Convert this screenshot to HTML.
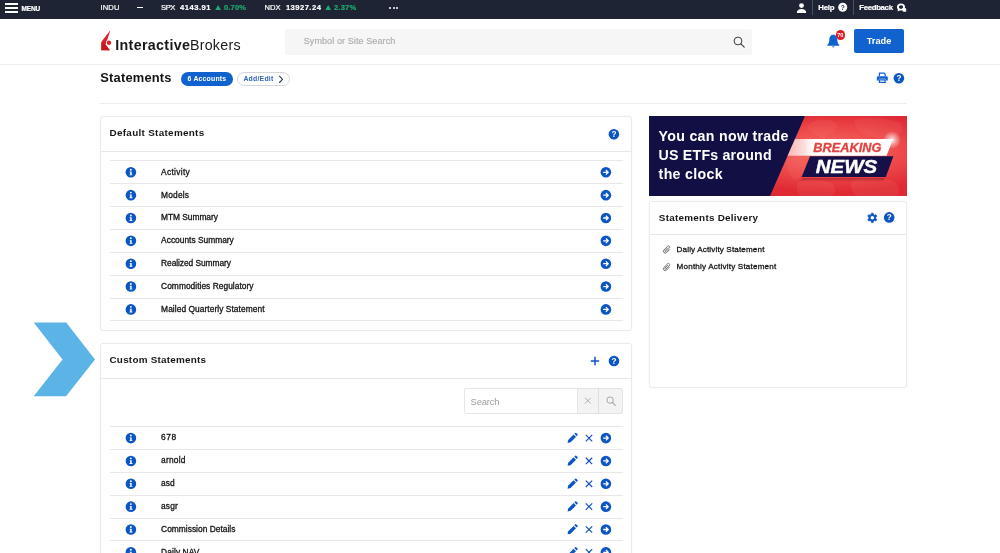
<!DOCTYPE html>
<html lang="en">
<head>
<meta charset="utf-8">
<title>Statements - Interactive Brokers</title>
<style>
*{box-sizing:border-box;margin:0;padding:0}
html,body{width:1000px;height:553px;overflow:hidden;background:#fff}
body{font-family:"Liberation Sans",sans-serif;color:#222;position:relative;will-change:transform}
.abs{position:absolute;white-space:nowrap;line-height:1}
#topbar{position:absolute;left:0;top:0;width:1000px;height:19px;background:#1e2434}
#topbar .t{position:absolute;white-space:nowrap;color:#fff;font-size:7.6px;line-height:1;top:3.6px;-webkit-text-stroke:0.2px #fff}
#topbar .g{-webkit-text-stroke:0.2px #20a86e}
#topbar .b{font-weight:bold}
#topbar .g{color:#20a86e;font-weight:bold}
.bar{position:absolute;left:5px;width:12.5px;height:2px;background:#fff}
.vdiv{position:absolute;top:0;width:1px;height:15px;background:#4a5060}
#header{position:absolute;left:0;top:19px;width:1000px;height:46.2px;background:#fff;border-bottom:1.5px solid #ececec}
#search{position:absolute;left:285px;top:29px;width:467px;height:26px;background:#f6f6f6;border-radius:2px}
#trade{position:absolute;left:854px;top:29.4px;width:50px;height:24px;background:#1161cf;border-radius:2px;color:#fff;font-weight:bold;font-size:9.2px;text-align:center;line-height:24px}
.card{position:absolute;background:#fff;border:1px solid #ebebeb;border-radius:3px;box-shadow:0 0 3px rgba(0,0,0,0.04)}
.hline{position:absolute;height:1px;background:#e8e8e8}
.ctitle{position:absolute;white-space:nowrap;font-size:9.9px;font-weight:bold;color:#161616;line-height:1}
.ic{position:absolute}
.rt2{font-size:8.4px;color:#141414;-webkit-text-stroke:0.3px #141414}
</style>
</head>
<body>

<!-- TOP BAR -->
<div id="topbar">
  <div class="bar" style="top:3px"></div>
  <div class="bar" style="top:7px"></div>
  <div class="bar" style="top:11px"></div>
  <span class="t b" id="menu" style="top:5.5px;font-size:6.5px;letter-spacing:-0.180px;left:21.60px">MENU</span>
  <span class="t" id="indu" style="letter-spacing:0.079px;left:100.60px">INDU</span>
  <div class="abs" style="left:136.5px;top:6.6px;width:6px;height:1.6px;background:#fff"></div>
  <span class="t" id="spx" style="letter-spacing:-0.402px;left:161.00px">SPX</span>
  <span class="t b" id="spxv" style="letter-spacing:0.508px;left:180.00px">4143.91</span>
    <span class="t g" id="spxp" style="letter-spacing:0.113px;left:224.00px">0.70%</span>
  <span class="t" id="ndx" style="letter-spacing:0.027px;left:264.60px">NDX</span>
  <span class="t b" id="ndxv" style="letter-spacing:0.473px;left:285.90px">13927.24</span>
    <span class="t g" id="ndxp" style="letter-spacing:0.213px;left:333.90px">2.37%</span>
  <div class="abs" style="left:389px;top:6.7px;width:2.2px;height:2.2px;border-radius:50%;background:#fff"></div>
  <div class="abs" style="left:392.6px;top:6.7px;width:2.2px;height:2.2px;border-radius:50%;background:#fff"></div>
  <div class="abs" style="left:396.2px;top:6.7px;width:2.2px;height:2.2px;border-radius:50%;background:#fff"></div>

    <div class="vdiv" style="left:812px"></div>
  <span class="t b" id="help" style="font-size:7.8px;top:3.8px;letter-spacing:-0.169px;left:818.20px">Help</span>
    <div class="vdiv" style="left:853px"></div>
  <span class="t b" id="feedback" style="font-size:7.8px;top:3.8px;letter-spacing:-0.312px;left:859.20px">Feedback</span>
  </div>

<!-- HEADER -->
<div id="header"></div>
<span class="abs" id="logo1" style="top:37.9px;font-size:14.25px;color:#1a1a1a;font-weight:bold;letter-spacing:0.350px;left:115.20px">Interactive</span>
<span class="abs" id="logo2" style="top:37.9px;font-size:14.25px;color:#1a1a1a;letter-spacing:0.265px;left:189.90px">Brokers</span>
<div id="search"></div>
<span class="abs" id="searchph" style="top:37.1px;font-size:9px;color:#adadad;-webkit-text-stroke:0.15px #adadad;letter-spacing:0.103px;left:303.70px">Symbol or Site Search</span>

<div class="abs" style="left:835.6px;top:30.2px;width:9.6px;height:9.6px;border-radius:50%;background:#e21c24"></div>
<span class="abs" id="badge70" style="left:837.2px;top:32.5px;font-size:5.6px;color:#fff;font-weight:bold">70</span>
<div id="trade">Trade</div>

<!-- TITLE ROW -->
<span class="abs" id="title" style="top:71.9px;font-size:12.9px;color:#141414;font-weight:bold;letter-spacing:0.189px;left:100.30px">Statements</span>
<div class="abs" style="left:181px;top:72px;width:51.5px;height:14px;border-radius:7px;background:#1161cf"></div>
<span class="abs" id="acct" style="top:75.8px;font-size:6.9px;color:#fff;font-weight:bold;letter-spacing:0.179px;left:187.60px">6 Accounts</span>
<div class="abs" style="left:236.5px;top:72px;width:53.5px;height:14px;border-radius:7px;background:#fff;border:1px solid #d4d7dc"></div>
<span class="abs" id="addedit" style="top:75.8px;font-size:6.9px;color:#2f66b8;font-weight:bold;letter-spacing:0.225px;left:243.40px">Add/Edit</span>

<!-- printer + help -->

<div class="hline" style="left:100px;top:102.5px;width:807px;background:#ececec"></div>

<!-- LEFT ARROW -->

<!-- DEFAULT STATEMENTS CARD -->
<div class="card" style="left:100px;top:116px;width:532px;height:214.5px"></div>
<span class="ctitle" id="ct1" style="top:128.32px;letter-spacing:0.309px;left:109.50px">Default Statements</span>
<div class="hline" style="left:101px;top:150.5px;width:530px"></div>
<div id="defrows">
<div class="hline" style="left:109.5px;top:160.40px;width:513px"></div>
<div class="hline" style="left:109.5px;top:183.25px;width:513px"></div>
<div class="hline" style="left:109.5px;top:206.10px;width:513px"></div>
<div class="hline" style="left:109.5px;top:228.95px;width:513px"></div>
<div class="hline" style="left:109.5px;top:251.80px;width:513px"></div>
<div class="hline" style="left:109.5px;top:274.65px;width:513px"></div>
<div class="hline" style="left:109.5px;top:297.50px;width:513px"></div>
<div class="hline" style="left:109.5px;top:320.35px;width:513px"></div>
<span class="abs rt2" id="d0" style="top:167.65px;letter-spacing:0.310px;left:161.10px">Activity</span>
<span class="abs rt2" id="d1" style="top:190.50px;letter-spacing:0.180px;left:161.10px">Models</span>
<span class="abs rt2" id="d2" style="top:213.35px;letter-spacing:-0.043px;left:161.10px">MTM Summary</span>
<span class="abs rt2" id="d3" style="top:236.20px;letter-spacing:0.006px;left:161.10px">Accounts Summary</span>
<span class="abs rt2" id="d4" style="top:259.05px;letter-spacing:-0.063px;left:161.10px">Realized Summary</span>
<span class="abs rt2" id="d5" style="top:281.90px;letter-spacing:0.033px;left:161.10px">Commodities Regulatory</span>
<span class="abs rt2" id="d6" style="top:304.75px;letter-spacing:0.058px;left:161.10px">Mailed Quarterly Statement</span>
</div><!--/defrows-->

<!-- CUSTOM STATEMENTS CARD -->
<div class="card" style="left:100px;top:343px;width:532px;height:230px"></div>
<span class="ctitle" id="ct2" style="top:355.07px;letter-spacing:0.235px;left:109.50px">Custom Statements</span>
<div class="hline" style="left:101px;top:378px;width:530px"></div>

<!-- search group -->
<div class="abs" style="left:464px;top:388px;width:159px;height:25.5px;border:1px solid #e6e6e6;border-radius:2.5px;background:#fff"></div>
<div class="abs" style="left:577.2px;top:388px;width:45.8px;height:25.5px;border:1px solid #e3e3e3;border-radius:0 2.5px 2.5px 0;background:#f3f3f3"></div>
<div class="abs" style="left:598px;top:388px;width:1px;height:25.5px;background:#dedede"></div>
<span class="abs" id="csearch" style="top:397.2px;font-size:9.4px;color:#9c9c9c;letter-spacing:-0.184px;left:470.60px">Search</span>
<div id="custrows">
<div class="hline" style="left:109.5px;top:426.20px;width:513px"></div>
<div class="hline" style="left:109.5px;top:449.05px;width:513px"></div>
<div class="hline" style="left:109.5px;top:471.90px;width:513px"></div>
<div class="hline" style="left:109.5px;top:494.75px;width:513px"></div>
<div class="hline" style="left:109.5px;top:517.60px;width:513px"></div>
<div class="hline" style="left:109.5px;top:540.45px;width:513px"></div>
<span class="abs rt2" id="c0" style="top:433.45px;letter-spacing:0.558px;left:161.10px">678</span>
<span class="abs rt2" id="c1" style="top:456.30px;letter-spacing:0.204px;left:161.10px">arnold</span>
<span class="abs rt2" id="c2" style="top:479.15px;letter-spacing:0.092px;left:161.10px">asd</span>
<span class="abs rt2" id="c3" style="top:502.00px;letter-spacing:0.101px;left:161.10px">asgr</span>
<span class="abs rt2" id="c4" style="top:524.85px;letter-spacing:0.018px;left:161.10px">Commission Details</span>
<span class="abs rt2" id="c5" style="top:547.70px;letter-spacing:0.094px;left:161.10px">Daily NAV</span>
</div><!--/custrows-->

<!-- BANNER -->
<div id="banner" class="abs" style="left:649px;top:116px;width:258px;height:79.5px;overflow:hidden;background:#e8363c">
  <svg width="258" height="80" viewBox="0 0 258 80" style="position:absolute;left:0;top:0">
    <defs>
      <radialGradient id="rg" cx="0.70" cy="0.45" r="0.5"><stop offset="0" stop-color="#f66f68"/><stop offset="0.55" stop-color="#ee4a4b"/><stop offset="1" stop-color="#df2a34"/></radialGradient>
      <linearGradient id="wg" x1="0" x2="1" y1="0" y2="0"><stop offset="0" stop-color="#fff" stop-opacity="0.55"/><stop offset="0.16" stop-color="#fff" stop-opacity="0.8"/><stop offset="0.24" stop-color="#fff" stop-opacity="1"/><stop offset="1" stop-color="#fff"/></linearGradient>
      <radialGradient id="sp" cx="0.5" cy="0.5" r="0.5"><stop offset="0" stop-color="#fff" stop-opacity="1"/><stop offset="0.35" stop-color="#fff" stop-opacity="0.55"/><stop offset="1" stop-color="#fff" stop-opacity="0"/></radialGradient>
      <linearGradient id="sh" x1="0" x2="0" y1="0" y2="1"><stop offset="0" stop-color="#7a0d1c" stop-opacity="0.45"/><stop offset="1" stop-color="#7a0d1c" stop-opacity="0"/></linearGradient>
    </defs>
    <rect x="0" y="0" width="258" height="80" fill="url(#rg)"/>
    <g fill="#f98a80" opacity="0.13">
      <path d="M160 8 C166 3 178 2 186 6 C190 10 186 16 180 18 C176 24 170 22 166 18 C160 16 156 12 160 8 Z"/>
      <path d="M206 4 C216 0 236 2 250 6 C256 10 254 18 246 20 C240 26 230 24 224 20 C214 20 204 12 206 4 Z"/>
      <path d="M140 42 C146 38 154 40 156 46 C158 54 152 62 146 64 C140 60 136 50 140 42 Z"/>
      <path d="M150 66 C160 62 176 64 184 68 C188 74 186 80 180 80 L152 80 C148 76 146 70 150 66 Z"/>
      <path d="M204 64 C214 60 236 62 246 66 C252 72 250 80 246 80 L208 80 C202 76 200 68 204 64 Z"/>
    </g>
    <path d="M0 0 H156 L121 80 H0 Z" fill="#120f45"/>
    <path d="M153 62 H236 L234 66 H151 Z" fill="url(#sh)"/>
    <path d="M146 23.1 H244 L237.6 39.8 H138.6 Z" fill="url(#wg)"/>
    <path d="M161 40.3 H244.4 L236.8 61 H152.7 Z" fill="#151048"/>
    <circle cx="243" cy="24" r="9" fill="url(#sp)"/>
    <text x="164.3" y="35.9" font-size="12.6" font-weight="bold" font-style="italic" fill="#e5403f" stroke="#e5403f" stroke-width="0.3" font-family="Liberation Sans, sans-serif" textLength="68" lengthAdjust="spacingAndGlyphs">BREAKING</text>
    <text x="166.7" y="57.4" font-size="19" font-weight="bold" font-style="italic" fill="#fff" stroke="#fff" stroke-width="0.4" font-family="Liberation Sans, sans-serif" textLength="61.5" lengthAdjust="spacingAndGlyphs">NEWS</text>
  </svg>
  <span class="abs" id="bn1" style="top:13px;font-size:14.2px;font-weight:bold;color:#fff;letter-spacing:0.289px;left:9.60px">You can now trade</span>
  <span class="abs" id="bn2" style="top:32px;font-size:14.2px;font-weight:bold;color:#fff;letter-spacing:0.203px;left:9.60px">US ETFs around</span>
  <span class="abs" id="bn3" style="top:51px;font-size:14.2px;font-weight:bold;color:#fff;letter-spacing:0.311px;left:9.60px">the clock</span>
</div>

<!-- DELIVERY CARD -->
<div class="card" style="left:649px;top:200.5px;width:258px;height:187.5px"></div>
<span class="ctitle" id="ct3" style="top:212.5px;letter-spacing:0.266px;left:658.80px">Statements Delivery</span>
<div class="hline" style="left:650px;top:234px;width:256px"></div>
<span class="abs rtx" id="dl1" style="top:245.5px;font-size:8.1px;color:#141414;-webkit-text-stroke:0.28px #141414;letter-spacing:0.140px;left:676.60px">Daily Activity Statement</span>
<span class="abs rtx" id="dl2" style="top:263px;font-size:8.1px;color:#141414;-webkit-text-stroke:0.28px #141414;letter-spacing:0.187px;left:676.60px">Monthly Activity Statement</span>

<svg id="overlay" width="1000" height="553" viewBox="0 0 1000 553" style="position:absolute;left:0;top:0;pointer-events:none">
<svg id="spxa" x="215.2" y="4.9" width="5.8" height="5.2" viewBox="0 0 58 52" overflow="visible"><path d="M29 0 L58 52 L0 52 Z" fill="#20a86e"/></svg>
<svg id="ndxa" x="325.3" y="4.9" width="5.8" height="5.2" viewBox="0 0 58 52" overflow="visible"><path d="M29 0 L58 52 L0 52 Z" fill="#20a86e"/></svg>
<svg x="796.5" y="3" width="10" height="10" viewBox="0 0 10 10" overflow="visible"><circle cx="5" cy="2.6" r="2.4" fill="#fff"/><path d="M0.3 10 C0.3 7.3 2.2 5.9 5 5.9 C7.8 5.9 9.7 7.3 9.7 10 Z" fill="#fff"/></svg>
<svg x="838.2" y="2.8" width="9" height="9" viewBox="0 0 9 9" overflow="visible"><circle cx="4.5" cy="4.5" r="4.5" fill="#fff"/><text x="4.5" y="6.9" font-size="6.6" font-weight="bold" text-anchor="middle" fill="#1e2434" font-family="Liberation Sans, sans-serif">?</text></svg>
<svg x="897" y="3.6" width="9.5" height="8.5" viewBox="0 0 19 17" overflow="visible"><ellipse cx="8" cy="7" rx="8" ry="7" fill="#fff"/><path d="M2 11 L1 16 L7 13 Z" fill="#fff"/><ellipse cx="8" cy="7" rx="4.4" ry="3.6" fill="#1e2434"/><circle cx="14.5" cy="12.5" r="4.2" fill="#fff"/><path d="M16 15 L19 17 L17.5 13 Z" fill="#fff"/></svg>
<svg id="logoicon" x="101" y="30" width="11.5" height="21" viewBox="0 0 23 42" overflow="visible">
  <path d="M18.6 0.6 L0.8 23.4 L0.8 40.4 L17.8 40.4 L9 29 L13.5 17 Z" fill="#dc2229"/>
  <path d="M0.8 25 L0.8 40.4 L17.8 40.4 L8 28 Z" fill="#c4161d"/>
  <circle cx="16" cy="25.5" r="5.8" fill="#fff"/>
  <circle cx="16" cy="25.5" r="4.4" fill="#dc2229"/>
</svg>
<svg x="733" y="36" width="12" height="12" viewBox="0 0 12 12" overflow="visible"><circle cx="5" cy="5" r="3.9" fill="none" stroke="#3a3a3a" stroke-width="1"/><path d="M7.9 7.9 L11.2 11.2" stroke="#3a3a3a" stroke-width="1.1" stroke-linecap="round"/></svg>
<svg x="826.8" y="34.5" width="13" height="14" viewBox="0 0 14 14" preserveAspectRatio="none" overflow="visible"><path d="M7 0.3 C4.2 0.3 2.7 2.4 2.7 5 C2.7 8 1.8 9.3 0.6 10.3 L0.6 11.2 L13.4 11.2 L13.4 10.3 C12.2 9.3 11.3 8 11.3 5 C11.3 2.4 9.8 0.3 7 0.3 Z" fill="#1161cf"/><path d="M5.5 12 A1.6 1.6 0 0 0 8.5 12 Z" fill="#1161cf"/></svg>
<svg x="278.5" y="75.3" width="5" height="8" viewBox="0 0 5 8" overflow="visible"><path d="M1 0.8 L4 4 L1 7.2" fill="none" stroke="#2a3a5a" stroke-width="1.1" stroke-linecap="round" stroke-linejoin="round"/></svg>
<svg x="876.8" y="72.5" width="11" height="10.5" viewBox="0 0 22 21" overflow="visible"><path d="M5 0 H15 L18 3 V7 H15.5 V3.8 L14 2.5 H6.5 V7 H4 V1 A1 1 0 0 1 5 0 Z" fill="#1161cf"/><path d="M2.5 7.5 H19.5 A2.5 2.5 0 0 1 22 10 V16 H18 V12.5 H4 V16 H0 V10 A2.5 2.5 0 0 1 2.5 7.5 Z" fill="#1161cf"/><path d="M4 13.5 H18 V20 A1 1 0 0 1 17 21 H5 A1 1 0 0 1 4 20 Z M6.5 16 V18.5 H15.5 V16 Z" fill="#1161cf" fill-rule="evenodd"/></svg>
<svg x="893.6" y="73" width="10.6" height="10.6" viewBox="0 0 10.6 10.6" overflow="visible"><circle cx="5.3" cy="5.3" r="5.3" fill="#0c55c4"/><text x="5.3" y="8.2" font-size="8.2" font-weight="bold" text-anchor="middle" fill="#fff" font-family="Liberation Sans, sans-serif">?</text></svg>
<svg x="33" y="322" width="63" height="75" viewBox="0 0 63 75" overflow="visible"><path d="M0.7 0.5 L33.2 0.5 L62 37.5 L33 74.3 L0.7 74.3 L29.5 37.5 Z" fill="#5bb3e6"/></svg>
<svg x="608.6" y="129" width="10.6" height="10.6" viewBox="0 0 10.6 10.6" overflow="visible"><circle cx="5.3" cy="5.3" r="5.3" fill="#0c55c4"/><text x="5.3" y="8.2" font-size="8.2" font-weight="bold" text-anchor="middle" fill="#fff" font-family="Liberation Sans, sans-serif">?</text></svg>
<svg x="125.6" y="167.00" width="10.6" height="10.6" viewBox="0 0 11 11" overflow="visible"><circle cx="5.5" cy="5.5" r="5.5" fill="#0c55c4"/><circle cx="5.45" cy="2.85" r="1.0" fill="#fff"/><path d="M4.3 4.75 H6.3 V7.7 H7 V8.6 H4.1 V7.7 H4.8 V5.65 H4.3 Z" fill="#fff"/></svg>
<svg x="600.6" y="167.00" width="10.6" height="10.6" viewBox="0 0 11 11" overflow="visible"><circle cx="5.5" cy="5.5" r="5.5" fill="#0c55c4"/><path d="M2.7 5.5 H7.7 M5.5 3.1 L7.9 5.5 L5.5 7.9" fill="none" stroke="#fff" stroke-width="1.3" stroke-linejoin="miter"/></svg>
<svg x="125.6" y="189.85" width="10.6" height="10.6" viewBox="0 0 11 11" overflow="visible"><circle cx="5.5" cy="5.5" r="5.5" fill="#0c55c4"/><circle cx="5.45" cy="2.85" r="1.0" fill="#fff"/><path d="M4.3 4.75 H6.3 V7.7 H7 V8.6 H4.1 V7.7 H4.8 V5.65 H4.3 Z" fill="#fff"/></svg>
<svg x="600.6" y="189.85" width="10.6" height="10.6" viewBox="0 0 11 11" overflow="visible"><circle cx="5.5" cy="5.5" r="5.5" fill="#0c55c4"/><path d="M2.7 5.5 H7.7 M5.5 3.1 L7.9 5.5 L5.5 7.9" fill="none" stroke="#fff" stroke-width="1.3" stroke-linejoin="miter"/></svg>
<svg x="125.6" y="212.70" width="10.6" height="10.6" viewBox="0 0 11 11" overflow="visible"><circle cx="5.5" cy="5.5" r="5.5" fill="#0c55c4"/><circle cx="5.45" cy="2.85" r="1.0" fill="#fff"/><path d="M4.3 4.75 H6.3 V7.7 H7 V8.6 H4.1 V7.7 H4.8 V5.65 H4.3 Z" fill="#fff"/></svg>
<svg x="600.6" y="212.70" width="10.6" height="10.6" viewBox="0 0 11 11" overflow="visible"><circle cx="5.5" cy="5.5" r="5.5" fill="#0c55c4"/><path d="M2.7 5.5 H7.7 M5.5 3.1 L7.9 5.5 L5.5 7.9" fill="none" stroke="#fff" stroke-width="1.3" stroke-linejoin="miter"/></svg>
<svg x="125.6" y="235.55" width="10.6" height="10.6" viewBox="0 0 11 11" overflow="visible"><circle cx="5.5" cy="5.5" r="5.5" fill="#0c55c4"/><circle cx="5.45" cy="2.85" r="1.0" fill="#fff"/><path d="M4.3 4.75 H6.3 V7.7 H7 V8.6 H4.1 V7.7 H4.8 V5.65 H4.3 Z" fill="#fff"/></svg>
<svg x="600.6" y="235.55" width="10.6" height="10.6" viewBox="0 0 11 11" overflow="visible"><circle cx="5.5" cy="5.5" r="5.5" fill="#0c55c4"/><path d="M2.7 5.5 H7.7 M5.5 3.1 L7.9 5.5 L5.5 7.9" fill="none" stroke="#fff" stroke-width="1.3" stroke-linejoin="miter"/></svg>
<svg x="125.6" y="258.40" width="10.6" height="10.6" viewBox="0 0 11 11" overflow="visible"><circle cx="5.5" cy="5.5" r="5.5" fill="#0c55c4"/><circle cx="5.45" cy="2.85" r="1.0" fill="#fff"/><path d="M4.3 4.75 H6.3 V7.7 H7 V8.6 H4.1 V7.7 H4.8 V5.65 H4.3 Z" fill="#fff"/></svg>
<svg x="600.6" y="258.40" width="10.6" height="10.6" viewBox="0 0 11 11" overflow="visible"><circle cx="5.5" cy="5.5" r="5.5" fill="#0c55c4"/><path d="M2.7 5.5 H7.7 M5.5 3.1 L7.9 5.5 L5.5 7.9" fill="none" stroke="#fff" stroke-width="1.3" stroke-linejoin="miter"/></svg>
<svg x="125.6" y="281.25" width="10.6" height="10.6" viewBox="0 0 11 11" overflow="visible"><circle cx="5.5" cy="5.5" r="5.5" fill="#0c55c4"/><circle cx="5.45" cy="2.85" r="1.0" fill="#fff"/><path d="M4.3 4.75 H6.3 V7.7 H7 V8.6 H4.1 V7.7 H4.8 V5.65 H4.3 Z" fill="#fff"/></svg>
<svg x="600.6" y="281.25" width="10.6" height="10.6" viewBox="0 0 11 11" overflow="visible"><circle cx="5.5" cy="5.5" r="5.5" fill="#0c55c4"/><path d="M2.7 5.5 H7.7 M5.5 3.1 L7.9 5.5 L5.5 7.9" fill="none" stroke="#fff" stroke-width="1.3" stroke-linejoin="miter"/></svg>
<svg x="125.6" y="304.10" width="10.6" height="10.6" viewBox="0 0 11 11" overflow="visible"><circle cx="5.5" cy="5.5" r="5.5" fill="#0c55c4"/><circle cx="5.45" cy="2.85" r="1.0" fill="#fff"/><path d="M4.3 4.75 H6.3 V7.7 H7 V8.6 H4.1 V7.7 H4.8 V5.65 H4.3 Z" fill="#fff"/></svg>
<svg x="600.6" y="304.10" width="10.6" height="10.6" viewBox="0 0 11 11" overflow="visible"><circle cx="5.5" cy="5.5" r="5.5" fill="#0c55c4"/><path d="M2.7 5.5 H7.7 M5.5 3.1 L7.9 5.5 L5.5 7.9" fill="none" stroke="#fff" stroke-width="1.3" stroke-linejoin="miter"/></svg>
<svg x="590.5" y="356.5" width="9" height="9" viewBox="0 0 9 9" overflow="visible"><path d="M4.5 0.3 V8.7 M0.3 4.5 H8.7" stroke="#0c55c4" stroke-width="1.5"/></svg>
<svg x="608.7" y="355.7" width="10.6" height="10.6" viewBox="0 0 10.6 10.6" overflow="visible"><circle cx="5.3" cy="5.3" r="5.3" fill="#0c55c4"/><text x="5.3" y="8.2" font-size="8.2" font-weight="bold" text-anchor="middle" fill="#fff" font-family="Liberation Sans, sans-serif">?</text></svg>
<svg x="584.3" y="397.2" width="7" height="7" viewBox="0 0 7 7" overflow="visible"><path d="M0.6 0.6 L6.4 6.4 M6.4 0.6 L0.6 6.4" stroke="#a6a6a6" stroke-width="0.9"/></svg>
<svg x="606" y="396" width="10" height="10" viewBox="0 0 10 10" overflow="visible"><circle cx="4.1" cy="4.1" r="3.2" fill="none" stroke="#a6a6a6" stroke-width="1"/><path d="M6.5 6.5 L9.3 9.3" stroke="#a6a6a6" stroke-width="1.1" stroke-linecap="round"/></svg>
<svg x="125.6" y="432.80" width="10.6" height="10.6" viewBox="0 0 11 11" overflow="visible"><circle cx="5.5" cy="5.5" r="5.5" fill="#0c55c4"/><circle cx="5.45" cy="2.85" r="1.0" fill="#fff"/><path d="M4.3 4.75 H6.3 V7.7 H7 V8.6 H4.1 V7.7 H4.8 V5.65 H4.3 Z" fill="#fff"/></svg>
<svg x="567.3" y="432.70" width="10.5" height="10.5" viewBox="0 0 21 21" overflow="visible"><path d="M0.5 20.5 L1.8 14.4 L12.6 3.6 L17.4 8.4 L6.6 19.2 Z" fill="#0c55c4"/><path d="M14 2.2 L15.8 0.5 A1.5 1.5 0 0 1 17.9 0.5 L20.5 3.1 A1.5 1.5 0 0 1 20.5 5.2 L18.8 7 Z" fill="#0c55c4"/></svg>
<svg x="585" y="434.10" width="8" height="8" viewBox="0 0 8 8" overflow="visible"><path d="M0.8 0.8 L7.2 7.2 M7.2 0.8 L0.8 7.2" stroke="#0d4fb8" stroke-width="1.15"/></svg>
<svg x="600.6" y="432.80" width="10.6" height="10.6" viewBox="0 0 11 11" overflow="visible"><circle cx="5.5" cy="5.5" r="5.5" fill="#0c55c4"/><path d="M2.7 5.5 H7.7 M5.5 3.1 L7.9 5.5 L5.5 7.9" fill="none" stroke="#fff" stroke-width="1.3" stroke-linejoin="miter"/></svg>
<svg x="125.6" y="455.65" width="10.6" height="10.6" viewBox="0 0 11 11" overflow="visible"><circle cx="5.5" cy="5.5" r="5.5" fill="#0c55c4"/><circle cx="5.45" cy="2.85" r="1.0" fill="#fff"/><path d="M4.3 4.75 H6.3 V7.7 H7 V8.6 H4.1 V7.7 H4.8 V5.65 H4.3 Z" fill="#fff"/></svg>
<svg x="567.3" y="455.55" width="10.5" height="10.5" viewBox="0 0 21 21" overflow="visible"><path d="M0.5 20.5 L1.8 14.4 L12.6 3.6 L17.4 8.4 L6.6 19.2 Z" fill="#0c55c4"/><path d="M14 2.2 L15.8 0.5 A1.5 1.5 0 0 1 17.9 0.5 L20.5 3.1 A1.5 1.5 0 0 1 20.5 5.2 L18.8 7 Z" fill="#0c55c4"/></svg>
<svg x="585" y="456.95" width="8" height="8" viewBox="0 0 8 8" overflow="visible"><path d="M0.8 0.8 L7.2 7.2 M7.2 0.8 L0.8 7.2" stroke="#0d4fb8" stroke-width="1.15"/></svg>
<svg x="600.6" y="455.65" width="10.6" height="10.6" viewBox="0 0 11 11" overflow="visible"><circle cx="5.5" cy="5.5" r="5.5" fill="#0c55c4"/><path d="M2.7 5.5 H7.7 M5.5 3.1 L7.9 5.5 L5.5 7.9" fill="none" stroke="#fff" stroke-width="1.3" stroke-linejoin="miter"/></svg>
<svg x="125.6" y="478.50" width="10.6" height="10.6" viewBox="0 0 11 11" overflow="visible"><circle cx="5.5" cy="5.5" r="5.5" fill="#0c55c4"/><circle cx="5.45" cy="2.85" r="1.0" fill="#fff"/><path d="M4.3 4.75 H6.3 V7.7 H7 V8.6 H4.1 V7.7 H4.8 V5.65 H4.3 Z" fill="#fff"/></svg>
<svg x="567.3" y="478.40" width="10.5" height="10.5" viewBox="0 0 21 21" overflow="visible"><path d="M0.5 20.5 L1.8 14.4 L12.6 3.6 L17.4 8.4 L6.6 19.2 Z" fill="#0c55c4"/><path d="M14 2.2 L15.8 0.5 A1.5 1.5 0 0 1 17.9 0.5 L20.5 3.1 A1.5 1.5 0 0 1 20.5 5.2 L18.8 7 Z" fill="#0c55c4"/></svg>
<svg x="585" y="479.80" width="8" height="8" viewBox="0 0 8 8" overflow="visible"><path d="M0.8 0.8 L7.2 7.2 M7.2 0.8 L0.8 7.2" stroke="#0d4fb8" stroke-width="1.15"/></svg>
<svg x="600.6" y="478.50" width="10.6" height="10.6" viewBox="0 0 11 11" overflow="visible"><circle cx="5.5" cy="5.5" r="5.5" fill="#0c55c4"/><path d="M2.7 5.5 H7.7 M5.5 3.1 L7.9 5.5 L5.5 7.9" fill="none" stroke="#fff" stroke-width="1.3" stroke-linejoin="miter"/></svg>
<svg x="125.6" y="501.35" width="10.6" height="10.6" viewBox="0 0 11 11" overflow="visible"><circle cx="5.5" cy="5.5" r="5.5" fill="#0c55c4"/><circle cx="5.45" cy="2.85" r="1.0" fill="#fff"/><path d="M4.3 4.75 H6.3 V7.7 H7 V8.6 H4.1 V7.7 H4.8 V5.65 H4.3 Z" fill="#fff"/></svg>
<svg x="567.3" y="501.25" width="10.5" height="10.5" viewBox="0 0 21 21" overflow="visible"><path d="M0.5 20.5 L1.8 14.4 L12.6 3.6 L17.4 8.4 L6.6 19.2 Z" fill="#0c55c4"/><path d="M14 2.2 L15.8 0.5 A1.5 1.5 0 0 1 17.9 0.5 L20.5 3.1 A1.5 1.5 0 0 1 20.5 5.2 L18.8 7 Z" fill="#0c55c4"/></svg>
<svg x="585" y="502.65" width="8" height="8" viewBox="0 0 8 8" overflow="visible"><path d="M0.8 0.8 L7.2 7.2 M7.2 0.8 L0.8 7.2" stroke="#0d4fb8" stroke-width="1.15"/></svg>
<svg x="600.6" y="501.35" width="10.6" height="10.6" viewBox="0 0 11 11" overflow="visible"><circle cx="5.5" cy="5.5" r="5.5" fill="#0c55c4"/><path d="M2.7 5.5 H7.7 M5.5 3.1 L7.9 5.5 L5.5 7.9" fill="none" stroke="#fff" stroke-width="1.3" stroke-linejoin="miter"/></svg>
<svg x="125.6" y="524.20" width="10.6" height="10.6" viewBox="0 0 11 11" overflow="visible"><circle cx="5.5" cy="5.5" r="5.5" fill="#0c55c4"/><circle cx="5.45" cy="2.85" r="1.0" fill="#fff"/><path d="M4.3 4.75 H6.3 V7.7 H7 V8.6 H4.1 V7.7 H4.8 V5.65 H4.3 Z" fill="#fff"/></svg>
<svg x="567.3" y="524.10" width="10.5" height="10.5" viewBox="0 0 21 21" overflow="visible"><path d="M0.5 20.5 L1.8 14.4 L12.6 3.6 L17.4 8.4 L6.6 19.2 Z" fill="#0c55c4"/><path d="M14 2.2 L15.8 0.5 A1.5 1.5 0 0 1 17.9 0.5 L20.5 3.1 A1.5 1.5 0 0 1 20.5 5.2 L18.8 7 Z" fill="#0c55c4"/></svg>
<svg x="585" y="525.50" width="8" height="8" viewBox="0 0 8 8" overflow="visible"><path d="M0.8 0.8 L7.2 7.2 M7.2 0.8 L0.8 7.2" stroke="#0d4fb8" stroke-width="1.15"/></svg>
<svg x="600.6" y="524.20" width="10.6" height="10.6" viewBox="0 0 11 11" overflow="visible"><circle cx="5.5" cy="5.5" r="5.5" fill="#0c55c4"/><path d="M2.7 5.5 H7.7 M5.5 3.1 L7.9 5.5 L5.5 7.9" fill="none" stroke="#fff" stroke-width="1.3" stroke-linejoin="miter"/></svg>
<svg x="125.6" y="547.05" width="10.6" height="10.6" viewBox="0 0 11 11" overflow="visible"><circle cx="5.5" cy="5.5" r="5.5" fill="#0c55c4"/><circle cx="5.45" cy="2.85" r="1.0" fill="#fff"/><path d="M4.3 4.75 H6.3 V7.7 H7 V8.6 H4.1 V7.7 H4.8 V5.65 H4.3 Z" fill="#fff"/></svg>
<svg x="567.3" y="546.95" width="10.5" height="10.5" viewBox="0 0 21 21" overflow="visible"><path d="M0.5 20.5 L1.8 14.4 L12.6 3.6 L17.4 8.4 L6.6 19.2 Z" fill="#0c55c4"/><path d="M14 2.2 L15.8 0.5 A1.5 1.5 0 0 1 17.9 0.5 L20.5 3.1 A1.5 1.5 0 0 1 20.5 5.2 L18.8 7 Z" fill="#0c55c4"/></svg>
<svg x="585" y="548.35" width="8" height="8" viewBox="0 0 8 8" overflow="visible"><path d="M0.8 0.8 L7.2 7.2 M7.2 0.8 L0.8 7.2" stroke="#0d4fb8" stroke-width="1.15"/></svg>
<svg x="600.6" y="547.05" width="10.6" height="10.6" viewBox="0 0 11 11" overflow="visible"><circle cx="5.5" cy="5.5" r="5.5" fill="#0c55c4"/><path d="M2.7 5.5 H7.7 M5.5 3.1 L7.9 5.5 L5.5 7.9" fill="none" stroke="#fff" stroke-width="1.3" stroke-linejoin="miter"/></svg>
<svg id="gear" x="866.3" y="211.85" width="12" height="12" viewBox="0 0 12 12" overflow="visible"><path d="M4.80 2.77 L5.15 1.28 L6.85 1.28 L7.20 2.77 L8.20 3.34 L9.67 2.90 L10.52 4.37 L9.40 5.42 L9.40 6.58 L10.52 7.63 L9.67 9.10 L8.20 8.66 L7.20 9.23 L6.85 10.72 L5.15 10.72 L4.80 9.23 L3.80 8.66 L2.33 9.10 L1.48 7.63 L2.60 6.58 L2.60 5.42 L1.48 4.37 L2.33 2.90 L3.80 3.34 Z" fill="#0c55c4" stroke="#0c55c4" stroke-width="0.7" stroke-linejoin="round"/><circle cx="6" cy="6" r="1.75" fill="#fff"/></svg>
<svg x="883.9" y="212.1" width="10.6" height="10.6" viewBox="0 0 10.6 10.6" overflow="visible"><circle cx="5.3" cy="5.3" r="5.3" fill="#0c55c4"/><text x="5.3" y="8.2" font-size="8.2" font-weight="bold" text-anchor="middle" fill="#fff" font-family="Liberation Sans, sans-serif">?</text></svg>
<svg x="661.6" y="244.5" width="10.4" height="10.4" viewBox="0 0 20 20" overflow="visible"><g transform="rotate(45 10 10)"><path d="M13.6 6.2 V14.2 A3.6 3.6 0 0 1 6.4 14.2 V4.4 A2.4 2.4 0 0 1 11.2 4.4 V13.6 A1.2 1.2 0 0 1 8.8 13.6 V6.4" fill="none" stroke="#707070" stroke-width="1.8" stroke-linecap="round"/></g></svg>
<svg x="661.6" y="262" width="10.4" height="10.4" viewBox="0 0 20 20" overflow="visible"><g transform="rotate(45 10 10)"><path d="M13.6 6.2 V14.2 A3.6 3.6 0 0 1 6.4 14.2 V4.4 A2.4 2.4 0 0 1 11.2 4.4 V13.6 A1.2 1.2 0 0 1 8.8 13.6 V6.4" fill="none" stroke="#707070" stroke-width="1.8" stroke-linecap="round"/></g></svg>
</svg><!--/overlay-->
</body>
</html>
